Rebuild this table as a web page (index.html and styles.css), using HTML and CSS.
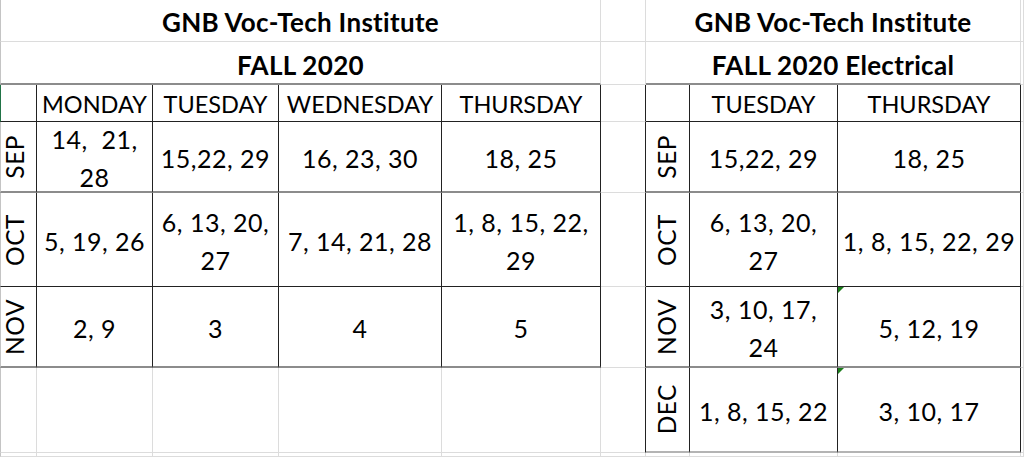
FILE: index.html
```html
<!DOCTYPE html>
<html>
<head>
<meta charset="utf-8">
<link rel="stylesheet" href="styles.css">
</head>
<body>
<div class="sheet">
  <!-- row 1 -->
  <div class="c first title span5">GNB Voc-Tech Institute</div>
  <div class="c"></div>
  <div class="c title span3">GNB Voc-Tech Institute</div>
  <div class="c"></div>
  <!-- row 2 -->
  <div class="c first title span5 top">FALL 2020</div>
  <div class="c"></div>
  <div class="c title span3 top">FALL 2020 Electrical</div>
  <div class="c"></div>
  <!-- row 3 -->
  <div class="c first sel k"></div>
  <div class="c head k">MONDAY</div>
  <div class="c head k">TUESDAY</div>
  <div class="c head k">WEDNESDAY</div>
  <div class="c head k">THURSDAY</div>
  <div class="c kr"></div>
  <div class="c k"></div>
  <div class="c head k">TUESDAY</div>
  <div class="c head k">THURSDAY</div>
  <div class="c"></div>
  <!-- row 4 SEP -->
  <div class="c first k gb month left"><span class="rot">SEP</span></div>
  <div class="c d k gb">14,&nbsp; 21,<br>28</div>
  <div class="c d k gb">15,22, 29</div>
  <div class="c d k gb">16, 23, 30</div>
  <div class="c d k gb">18, 25</div>
  <div class="c kr"></div>
  <div class="c k gb month"><span class="rot">SEP</span></div>
  <div class="c d k gb">15,22, 29</div>
  <div class="c d k gb">18, 25</div>
  <div class="c"></div>
  <!-- row 5 OCT -->
  <div class="c first k month left"><span class="rot">OCT</span></div>
  <div class="c d k">5, 19, 26</div>
  <div class="c d k">6, 13, 20,<br>27</div>
  <div class="c d k">7, 14, 21, 28</div>
  <div class="c d k">1, 8, 15, 22,<br>29</div>
  <div class="c kr"></div>
  <div class="c k month"><span class="rot">OCT</span></div>
  <div class="c d k">6, 13, 20,<br>27</div>
  <div class="c d k">1, 8, 15, 22, 29</div>
  <div class="c"></div>
  <!-- row 6 NOV -->
  <div class="c first k gb month left"><span class="rot">NOV</span></div>
  <div class="c d k gb">2, 9</div>
  <div class="c d k gb">3</div>
  <div class="c d k gb">4</div>
  <div class="c d k gb">5</div>
  <div class="c kr"></div>
  <div class="c k gb month"><span class="rot">NOV</span></div>
  <div class="c d k gb">3, 10, 17,<br>24</div>
  <div class="c d k gb flag">5, 12, 19</div>
  <div class="c"></div>
  <!-- row 7 DEC -->
  <div class="c first"></div>
  <div class="c"></div>
  <div class="c"></div>
  <div class="c"></div>
  <div class="c"></div>
  <div class="c kr"></div>
  <div class="c k lb month"><span class="rot">DEC</span></div>
  <div class="c d k lb">1, 8, 15, 22</div>
  <div class="c d k lb flag">3, 10, 17</div>
  <div class="c"></div>
  <!-- row 8 -->
  <div class="c first"></div>
  <div class="c"></div>
  <div class="c"></div>
  <div class="c"></div>
  <div class="c"></div>
  <div class="c"></div>
  <div class="c"></div>
  <div class="c"></div>
  <div class="c"></div>
  <div class="c"></div>
</div>
</body>
</html>
```

FILE: styles.css
```css
html, body {
  margin: 0;
  padding: 0;
  background: #ffffff;
}

body {
  font-family: Lato, "Liberation Sans", sans-serif;
  color: #000000;
  width: 1024px;
  height: 457px;
  overflow: hidden;
}

.sheet {
  display: grid;
  grid-template-columns: 37px 116px 126px 163px 159px 45px 44px 148px 183px 3px;
  grid-template-rows: 42px 43px 37px 71px 94px 81px 85px 4px;
  width: 1024px;
  height: 457px;
}

.c {
  box-sizing: border-box;
  border-right: 1px solid #dcdcdc;
  border-bottom: 1px solid #dcdcdc;
  min-width: 0;
  min-height: 0;
  position: relative;
}

.first {
  border-left: 1px solid #c4c4c4;
}

.sel {
  border-left: 1px solid #217346;
}

.span5 { grid-column: span 5; }
.span3 { grid-column: span 3; }

.title {
  display: flex;
  align-items: flex-end;
  justify-content: center;
  font-weight: 700;
  font-size: 26px;
  letter-spacing: 0.3px;
  line-height: 31.2px;
  padding-bottom: 3px;
  white-space: nowrap;
}

.top {
  border-bottom: 2px solid #8c8c8c;
  padding-bottom: 2px;
}

.k {
  border-right: 1px solid #222222;
  border-bottom: 1px solid #222222;
}

.kr {
  border-right: 1px solid #222222;
}

.gb {
  border-bottom: 2px solid #8c8c8c;
}

.lb {
  border-bottom: 2px solid #b4b4b4;
}

.head {
  display: flex;
  align-items: flex-end;
  justify-content: center;
  font-size: 23.5px;
  line-height: 28px;
  padding-bottom: 3px;
  white-space: nowrap;
}

.d {
  display: flex;
  align-items: center;
  justify-content: center;
  text-align: center;
  font-size: 25px;
  line-height: 37.5px;
  letter-spacing: 0.5px;
  padding-top: 4px;
  white-space: nowrap;
}

.month {
  display: flex;
  align-items: center;
  justify-content: center;
}

.month.left {
  justify-content: flex-start;
  border-left-color: #c4c4c4;
}

.rot {
  writing-mode: vertical-rl;
  transform: rotate(180deg);
  font-size: 24.5px;
  line-height: 28.8px;
  letter-spacing: 0.5px;
  white-space: nowrap;
}

.flag::before {
  content: "";
  position: absolute;
  top: 0;
  left: 0;
  width: 0;
  height: 0;
  border-top: 6px solid #1b7d1b;
  border-right: 6px solid transparent;
}
```
